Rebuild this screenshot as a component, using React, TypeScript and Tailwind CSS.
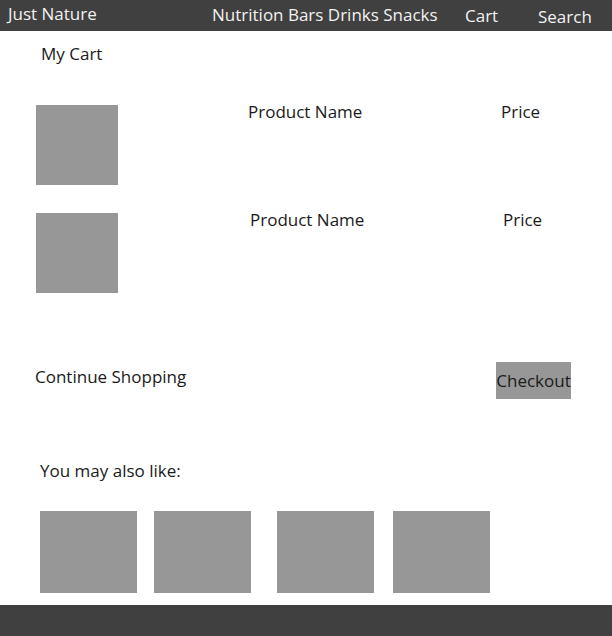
import React from 'react'

const font = { fontFamily: '"Open Sans", "Liberation Sans", sans-serif' }

function CartRow({ nameX }: { nameX: string }) {
  return (
    <div className="flex items-start">
      <div className="ml-[36px] mt-[4px] w-[82px] h-[80px] bg-[#979797]" />
      <span className={`${nameX} w-[253px] leading-[22px] whitespace-nowrap`}>Product Name</span>
      <span className="leading-[22px]">Price</span>
    </div>
  )
}

export default function App() {
  return (
    <div style={font} className="w-[612px] h-[636px] bg-white text-[17px] text-[#1a1a1a] flex flex-col">
      {/* Top bar */}
      <header className="h-[31px] bg-[#404040] text-[#f2f2f2] flex items-start whitespace-nowrap">
        <span className="ml-[8px] w-[204px] mt-[3px] leading-[22px]">Just Nature</span>
        <span className="w-[253px] mt-[4px] leading-[22px]">Nutrition Bars Drinks Snacks</span>
        <span className="w-[73px] mt-[5px] leading-[22px]">Cart</span>
        <span className="mt-[6px] leading-[22px]">Search</span>
      </header>

      <main className="flex-1 flex flex-col">
        <h1 className="ml-[41px] mt-[12px] leading-[22px] font-normal">My Cart</h1>

        <div className="mt-[36px]">
          <CartRow nameX="ml-[130px]" />
        </div>
        <div className="mt-[24px]">
          <CartRow nameX="ml-[132px]" />
        </div>

        <div className="mt-[69px] flex items-start">
          <span className="ml-[35px] mt-[4px] leading-[22px]">Continue Shopping</span>
          <button className="ml-auto mr-[41px] w-[75px] h-[37px] bg-[#979797] text-[#1a1a1a] flex items-center justify-center pt-[1px] leading-[22px] whitespace-nowrap">
            Checkout
          </button>
        </div>

        <p className="ml-[40px] mt-[61px] leading-[22px]">You may also like:</p>

        <div className="mt-[29px] ml-[40px] flex">
          <div className="w-[97px] h-[82px] bg-[#979797]" />
          <div className="ml-[17px] w-[97px] h-[82px] bg-[#979797]" />
          <div className="ml-[26px] w-[97px] h-[82px] bg-[#979797]" />
          <div className="ml-[19px] w-[97px] h-[82px] bg-[#979797]" />
        </div>
      </main>

      <footer className="h-[31px] bg-[#404040]" />
    </div>
  )
}
